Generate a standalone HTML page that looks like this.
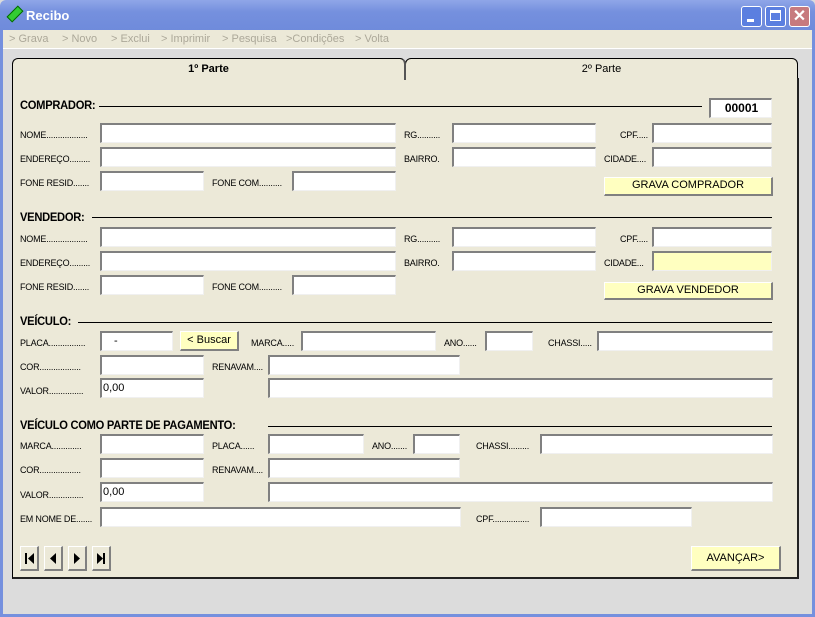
<!DOCTYPE html>
<html><head><meta charset="utf-8"><style>
*{margin:0;padding:0;box-sizing:border-box}
body{width:815px;height:617px;overflow:hidden;background:#dcdcdc;font-family:"Liberation Sans",sans-serif;position:relative}
.a{position:absolute}
.title{left:0;top:0;width:815px;height:30px;background:linear-gradient(#8fa6e8,#7590de 40%,#6f8bdb);border-radius:6px 6px 0 0;color:#fff;font-weight:bold;font-size:13px}
.menu{left:3px;top:30px;width:809px;height:19px;background:#ece9d8;border-bottom:1px solid #fff;color:#aca899;font-size:11px}
.menu span{position:absolute;top:3px}
.side{background:#7590de}
.panel{left:12px;top:78px;width:787px;height:501px;background:#ece9d8;border:1px solid #000;border-top:none;border-right:2px solid #222;border-bottom:2px solid #222}
.tab{height:22px;border:1px solid #000;border-bottom:none;border-radius:6px 6px 0 0;background:#ece9d8;font-size:11px;text-align:center;line-height:20px}
.in{background:#fff;border-top:2px solid #808080;border-left:2px solid #808080;border-bottom:1px solid #f0f0f0;border-right:1px solid #f0f0f0;height:20px;font-size:11px;padding-left:1px;line-height:17px}
.l{font-size:9px;color:#000;letter-spacing:-0.2px;white-space:nowrap}
.h{font-size:12px;font-weight:bold;letter-spacing:-0.3px;transform:scaleX(0.93);transform-origin:left}
.ln{height:1px;background:#000}
.btn{background:#ffffc0;border-top:1px solid #fff;border-left:1px solid #fff;border-right:2px solid #808080;border-bottom:2px solid #808080;font-size:11px;text-align:center;line-height:15px}
.nb{width:19px;height:25px;background:#ece9d8;border-top:1px solid #fff;border-left:1px solid #fff;border-right:2px solid #808080;border-bottom:2px solid #808080}
</style></head><body>
<div class="a title"><span class="a" style="left:7px;top:10px;width:16px;height:8px;background:#3c3;transform:rotate(-45deg);border:1px solid #060"></span><span class="a" style="left:26px;top:8px">Recibo</span>
<div class="a" style="left:741px;top:6px;width:21px;height:21px;background:#5b7fe0;border:1px solid #fff;border-radius:3px"><div class="a" style="left:5px;top:12px;width:7px;height:3px;background:#fff"></div></div>
<div class="a" style="left:765px;top:6px;width:21px;height:21px;background:#5b7fe0;border:1px solid #fff;border-radius:3px"><div class="a" style="left:4px;top:3px;width:11px;height:11px;border:1px solid #fff;border-top-width:3px"></div></div>
<div class="a" style="left:789px;top:6px;width:21px;height:21px;background:#c77a7e;border:1px solid #fff;border-radius:3px;color:#fff;font-size:16px;text-align:center;line-height:19px">✕</div>
</div>
<div class="a side" style="left:0;top:30px;width:3px;height:587px"></div>
<div class="a side" style="left:812px;top:30px;width:3px;height:587px"></div>
<div class="a side" style="left:0;top:614px;width:815px;height:3px"></div>
<div class="a menu"><span style="left:6px">&gt; Grava</span><span style="left:59px">&gt; Novo</span><span style="left:108px">&gt; Exclui</span><span style="left:158px">&gt; Imprimir</span><span style="left:219px">&gt; Pesquisa</span><span style="left:283px">&gt;Condições</span><span style="left:352px">&gt; Volta</span></div>
<div class="a tab" style="left:405px;top:58px;width:393px;height:21px;border-bottom:1px solid #000">2º Parte</div>
<div class="a panel"></div>
<div class="a tab" style="left:12px;top:58px;width:394px;font-weight:bold;height:22px;border-right:2px solid #555">1º Parte</div>

<div class="a h" style="left:20px;top:98px">COMPRADOR:</div><div class="a ln" style="left:99px;top:106px;width:603px"></div>
<div class="a in" style="left:709px;top:98px;width:63px;font-weight:bold;font-size:12px;text-align:center">00001</div>
<div class="a l" style="left:20px;top:130px">NOME..................</div><div class="a in" style="left:100px;top:123px;width:296px"></div>
<div class="a l" style="left:404px;top:130px">RG..........</div><div class="a in" style="left:452px;top:123px;width:144px"></div>
<div class="a l" style="left:620px;top:130px">CPF.....</div><div class="a in" style="left:652px;top:123px;width:120px"></div>
<div class="a l" style="left:20px;top:154px">ENDEREÇO.........</div><div class="a in" style="left:100px;top:147px;width:296px"></div>
<div class="a l" style="left:404px;top:154px">BAIRRO.</div><div class="a in" style="left:452px;top:147px;width:144px"></div>
<div class="a l" style="left:604px;top:154px">CIDADE....</div><div class="a in" style="left:652px;top:147px;width:120px"></div>
<div class="a l" style="left:20px;top:178px">FONE RESID.......</div><div class="a in" style="left:100px;top:171px;width:104px"></div>
<div class="a l" style="left:212px;top:178px">FONE COM..........</div><div class="a in" style="left:292px;top:171px;width:104px"></div>
<div class="a btn" style="left:604px;top:177px;width:169px;height:19px">GRAVA COMPRADOR</div>

<div class="a h" style="left:20px;top:210px">VENDEDOR:</div><div class="a ln" style="left:92px;top:217px;width:680px"></div>
<div class="a l" style="left:20px;top:234px">NOME..................</div><div class="a in" style="left:100px;top:227px;width:296px"></div>
<div class="a l" style="left:404px;top:234px">RG..........</div><div class="a in" style="left:452px;top:227px;width:144px"></div>
<div class="a l" style="left:620px;top:234px">CPF.....</div><div class="a in" style="left:652px;top:227px;width:120px"></div>
<div class="a l" style="left:20px;top:258px">ENDEREÇO.........</div><div class="a in" style="left:100px;top:251px;width:296px"></div>
<div class="a l" style="left:404px;top:258px">BAIRRO.</div><div class="a in" style="left:452px;top:251px;width:144px"></div>
<div class="a l" style="left:604px;top:258px">CIDADE...</div><div class="a in" style="left:652px;top:251px;width:120px;background:#ffffc0"></div>
<div class="a l" style="left:20px;top:282px">FONE RESID.......</div><div class="a in" style="left:100px;top:275px;width:104px"></div>
<div class="a l" style="left:212px;top:282px">FONE COM..........</div><div class="a in" style="left:292px;top:275px;width:104px"></div>
<div class="a btn" style="left:604px;top:282px;width:169px;height:18px">GRAVA VENDEDOR</div>

<div class="a h" style="left:20px;top:314px">VEÍCULO:</div><div class="a ln" style="left:78px;top:322px;width:694px"></div>
<div class="a l" style="left:20px;top:338px">PLACA................</div><div class="a in" style="left:100px;top:331px;width:73px;padding-left:12px">-</div>
<div class="a btn" style="left:180px;top:331px;width:59px;height:20px;line-height:17px">&lt; Buscar</div>
<div class="a l" style="left:251px;top:338px">MARCA.....</div><div class="a in" style="left:301px;top:331px;width:135px"></div>
<div class="a l" style="left:444px;top:338px">ANO......</div><div class="a in" style="left:485px;top:331px;width:48px"></div>
<div class="a l" style="left:548px;top:338px">CHASSI.....</div><div class="a in" style="left:597px;top:331px;width:176px"></div>
<div class="a l" style="left:20px;top:362px">COR..................</div><div class="a in" style="left:100px;top:355px;width:104px"></div>
<div class="a l" style="left:212px;top:362px">RENAVAM....</div><div class="a in" style="left:268px;top:355px;width:192px"></div>
<div class="a l" style="left:20px;top:386px">VALOR...............</div><div class="a in" style="left:100px;top:378px;width:104px">0,00</div>
<div class="a in" style="left:268px;top:378px;width:505px"></div>

<div class="a h" style="left:20px;top:418px">VEÍCULO COMO PARTE DE PAGAMENTO:</div><div class="a ln" style="left:268px;top:426px;width:504px"></div>
<div class="a l" style="left:20px;top:441px">MARCA.............</div><div class="a in" style="left:100px;top:434px;width:104px"></div>
<div class="a l" style="left:212px;top:441px">PLACA......</div><div class="a in" style="left:268px;top:434px;width:96px"></div>
<div class="a l" style="left:372px;top:441px">ANO.......</div><div class="a in" style="left:413px;top:434px;width:47px"></div>
<div class="a l" style="left:476px;top:441px">CHASSI.........</div><div class="a in" style="left:540px;top:434px;width:233px"></div>
<div class="a l" style="left:20px;top:465px">COR..................</div><div class="a in" style="left:100px;top:458px;width:104px"></div>
<div class="a l" style="left:212px;top:465px">RENAVAM....</div><div class="a in" style="left:268px;top:458px;width:192px"></div>
<div class="a l" style="left:20px;top:490px">VALOR...............</div><div class="a in" style="left:100px;top:482px;width:104px">0,00</div>
<div class="a in" style="left:268px;top:482px;width:505px"></div>
<div class="a l" style="left:20px;top:514px">EM NOME DE.......</div><div class="a in" style="left:100px;top:507px;width:361px"></div>
<div class="a l" style="left:476px;top:514px">CPF................</div><div class="a in" style="left:540px;top:507px;width:152px"></div>

<div class="a nb" style="left:20px;top:546px"><svg width="16" height="22"><rect x="4" y="6" width="2" height="11"/><path d="M13 6v11l-6-5.5z"/></svg></div>
<div class="a nb" style="left:44px;top:546px"><svg width="16" height="22"><path d="M11 6v11l-6-5.5z"/></svg></div>
<div class="a nb" style="left:68px;top:546px"><svg width="16" height="22"><path d="M5 6v11l6-5.5z"/></svg></div>
<div class="a nb" style="left:92px;top:546px"><svg width="16" height="22"><path d="M4 6v11l6-5.5z"/><rect x="10" y="6" width="2" height="11"/></svg></div>
<div class="a btn" style="left:691px;top:546px;width:90px;height:25px;line-height:22px">AVANÇAR&gt;</div>
</body></html>
